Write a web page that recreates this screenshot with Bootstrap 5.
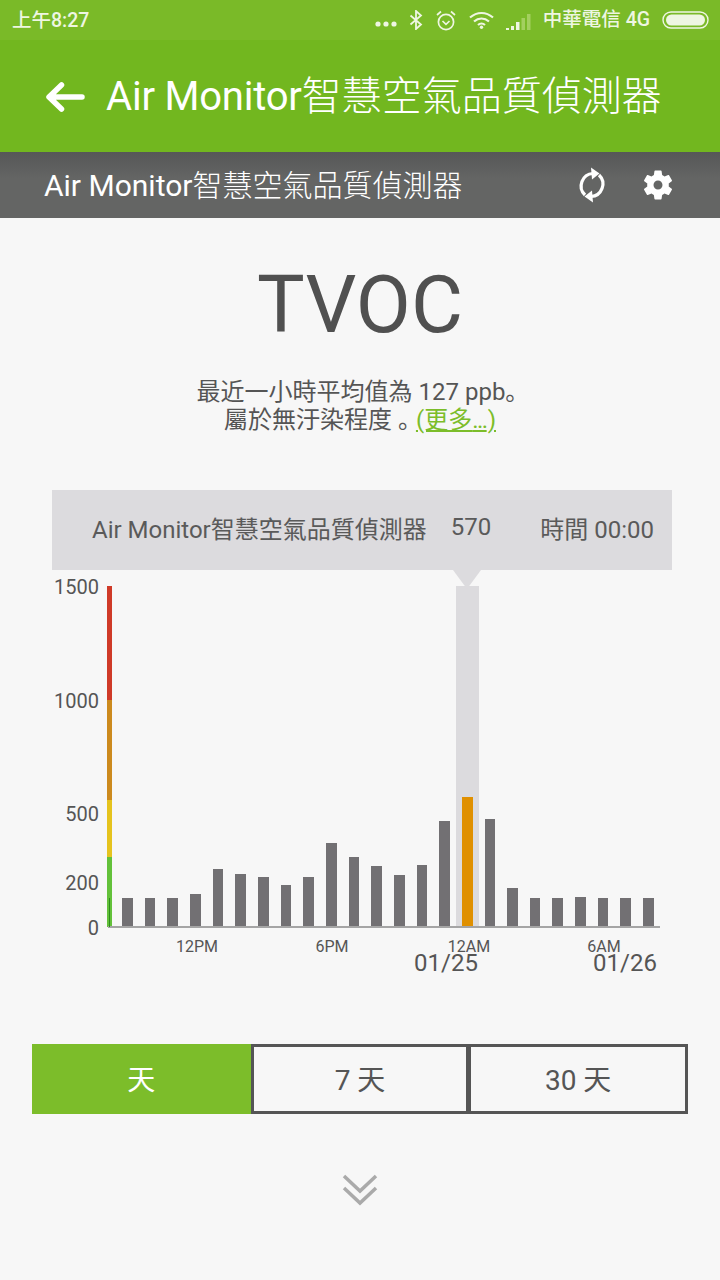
<!DOCTYPE html>
<html lang="zh-Hant">
<head>
  <meta charset="UTF-8">
  <title>Air Monitor</title>
  <meta name="viewport" content="width=device-width, initial-scale=1">
  <link href="https://cdn.jsdelivr.net/npm/bootstrap@5.3.3/dist/css/bootstrap.min.css" rel="stylesheet">
  <style>
    html, body { height: 100%; }
    body {
      width: 720px; height: 1280px; overflow: hidden; background: #f7f7f7; color: #555;
      font-family: Roboto, "Noto Sans CJK TC", sans-serif;
    }
    .status-bar { height: 40px; background: #7aba28; color: #eef6e2; font-size: 19.5px; font-weight: 500; padding: 1px 11px 0 12px; }
    .status-icons { gap: 12px; margin-top: -1px; }
    .app-bar { height: 112px; background: #72b71f; color: #fff; padding: 2px 0 0 45px; gap: 21px; font-size: 40px; line-height: 1; }
    .app-bar .latin { letter-spacing: -.2px; }
    .cjk-light { font-weight: 300; }
    .sub-bar { height: 66px; background: linear-gradient(#565757, #646564 40%); color: #fff; font-size: 30px; padding: 2px 44px 0; line-height: 1; }
    .sub-icons { gap: 31px; margin-top: -2px; }
    .title-big { font-size: 80px; line-height: 1; margin: 47px 0 0; font-weight: 400; color: #505050; }
    .summary { font-family: Roboto, "Noto Sans CJK JP", sans-serif; font-size: 24px; line-height: 28px; margin-top: 33px; color: #555; }
    .summary a { color: #7cbd2a; }
    .summary .dots { letter-spacing: -1.5px; margin-right: 1px; }
    .summary .stop { letter-spacing: -6px; }
    .tip-bar { height: 80px; margin: 56px 48px 0 52px; background: #dcdbde; font-size: 24px; color: #5a5a5a; padding: 0 18px 1px 40px; }
    .tip-val { margin-left: 24px; padding-bottom: 6px; }
    .chart { position: relative; height: 410px; margin: 0; }
    .chart > * { position: absolute; }
    .tip-arrow { left: 453px; top: 0; width: 0; height: 0; border-left: 14px solid transparent; border-right: 14px solid transparent; border-top: 19px solid #dcdbde; }
    .hl-col { left: 456px; top: 16px; width: 23px; height: 341px; background: #dcdbde; }
    .base-line { left: 108px; top: 356px; width: 552px; height: 2px; background: #a5a5a5; }
    .scale { left: 107px; top: 16px; width: 4.5px; height: 341px; display: flex; flex-direction: column; }
    .scale i { display: block; }
    .scale-tick { left: 108.5px; top: 328px; width: 1.5px; height: 29px; background: #2e8b1c; }
    .bars { left: 122px; top: 16px; height: 341px; display: flex; align-items: flex-end; gap: 12px; }
    .bars i { display: block; width: 10.67px; background: #727073; }
    .bars i.on { background: #e09000; }
    .y-lab { right: 621px; font-size: 20px; line-height: 20px; color: #555; }
    .x-lab { font-size: 16px; line-height: 18px; color: #555; transform: translateX(-50%); }
    .date-lab { font-size: 24px; line-height: 24px; color: #555; transform: translateX(-50%); }
    .range-group { margin: 64px 32px 0; height: 70px; }
    .range-group .btn { flex: 0 0 calc(100% / 3); border-radius: 0; border: 3px solid #555; border-left-width: 0; color: #555; font-size: 28px; background: transparent; padding: 4px 0 0; line-height: 1; }
    .range-group .btn.on { background: #7cbd2a; border-color: #7cbd2a; border-right-width: 0; color: #fff; }
    .range-group .btn.on + .btn { border-left: 3px solid #555; }
    .range-group .btn:last-child { border-left: 2px solid #555; }
    .more-down { margin-top: 60px; }
  </style>
</head>
<body>

  <!-- Status bar -->
  <div class="status-bar d-flex align-items-center justify-content-between">
    <span>上午8:27</span>
    <div class="status-icons d-flex align-items-center">
      <svg width="22" height="8" viewBox="0 0 22 8" fill="#eef6e2" class="mt-2"><circle cx="3" cy="4" r="2.600"/><circle cx="11" cy="4" r="2.600"/><circle cx="19" cy="4" r="2.600"/></svg>
      <svg width="15" height="20" viewBox="0 0 15 20" fill="none" stroke="#eef6e2" stroke-width="1.800"><path d="M1.500 5.500 12 14.500 7 19V1l5 4.500L1.500 14.500"/></svg>
      <svg width="21" height="21" viewBox="0 0 21 21" fill="none" stroke="#eef6e2" stroke-width="1.700"><circle cx="10" cy="12" r="7.600"/><path d="M6.500 11 10 14.300l3.500-3.300M1 5l4-3.500M19 5l-4-3.500"/></svg>
      <svg width="25" height="18" viewBox="0 0 25 18" fill="none" stroke="#eef6e2" stroke-width="2.200"><path d="M1 6.500c7-6 16-6 23 0M5 10.500c4.500-4 10.500-4 15 0M9 14c2-1.800 5-1.800 7 0"/><circle cx="12.500" cy="16.300" r="1.700" fill="#eef6e2" stroke="none"/></svg>
      <svg width="25" height="18" viewBox="0 0 25 18" class="mt-1"><path d="M0 15h3v2H0zM5 13h3v4H5zM10 9h3.500v8H10z" fill="#eef6e2"/><path d="M15.500 5h3.500v12h-3.500zM21 1h3.500v16H21z" fill="#a3d05f"/></svg>
      <span>中華電信 4G</span>
      <svg width="47" height="18" viewBox="0 0 47 18"><rect x="1" y="1" width="45" height="16" rx="8" fill="none" stroke="#eef6e2" stroke-width="1.400"/><rect x="4" y="3.500" width="39" height="11" rx="5.500" fill="#eef6e2"/></svg>
    </div>
  </div>

  <!-- App bar -->
  <div class="app-bar d-flex align-items-center">
    <svg width="40" height="34" viewBox="0 0 40 34" fill="none" stroke="#fff" stroke-width="5.500" stroke-linecap="round" stroke-linejoin="round"><path d="M37 17H5M16.500 5 4 17l12.500 12"/></svg>
    <span><span class="latin">Air Monitor</span><span class="cjk-light">智慧空氣品質偵測器</span></span>
  </div>

  <!-- Device bar -->
  <div class="sub-bar d-flex align-items-center justify-content-between">
    <span>Air Monitor<span class="cjk-light">智慧空氣品質偵測器</span></span>
    <div class="sub-icons d-flex align-items-center">
      <svg width="34" height="40" viewBox="0 0 34 40" fill="none" stroke="#fff" stroke-width="3.200"><path d="M18 8.500A12.500 12.500 0 0 0 10 30"/><path d="M16 31.500A12.500 12.500 0 0 0 24 10"/><path d="M16 2.500 24.500 8.500 17 14.500z" fill="#fff" stroke="none"/><path d="M18 37.500 9.500 31.500 17 25.500z" fill="#fff" stroke="none"/></svg>
      <svg width="36" height="36" viewBox="0 0 24 24" fill="#fff"><path d="M19.140 12.940c.04-.3.060-.61.060-.94s-.02-.64-.07-.94l2.030-1.580c.18-.14.230-.41.120-.61l-1.920-3.320c-.12-.22-.37-.29-.59-.22l-2.390.96c-.5-.38-1.030-.7-1.620-.94l-.36-2.540c-.04-.24-.24-.41-.48-.41h-3.840c-.24 0-.43.170-.47.410l-.36 2.540c-.59.240-1.130.57-1.620.94l-2.390-.96c-.22-.08-.47 0-.59.220L2.740 8.870c-.12.210-.08.470.12.610l2.030 1.580c-.05.3-.09.630-.09.940s.02.640.07.940l-2.030 1.580c-.18.140-.23.410-.12.610l1.920 3.320c.12.220.37.290.59.220l2.390-.96c.5.380 1.030.7 1.620.94l.36 2.540c.05.240.24.410.48.410h3.840c.24 0 .44-.17.47-.41l.36-2.540c.59-.24 1.130-.56 1.620-.94l2.390.96c.22.080.47 0 .59-.22l1.920-3.320c.12-.22.070-.47-.12-.61l-2.010-1.580zM12 15c-1.650 0-3-1.350-3-3s1.350-3 3-3 3 1.350 3 3-1.350 3-3 3z"/></svg>
    </div>
  </div>

  <!-- Summary -->
  <div class="text-center">
    <h1 class="title-big">TVOC</h1>
    <p class="summary mb-0" lang="ja">&nbsp;最近一小時平均值為 127 ppb。<br>屬於無汙染程度 <span class="stop">。</span><a href="#">(更多<span class="dots">...</span>)</a></p>
  </div>

  <!-- Tooltip bar -->
  <div class="tip-bar d-flex align-items-center">
    <span>Air Monitor智慧空氣品質偵測器</span>
    <span class="tip-val">570</span>
    <span class="ms-auto">時間 00:00</span>
  </div>

  <!-- Chart -->
  <div class="chart" id="chart">
    <div class="hl-col"></div>
    <div class="tip-arrow"></div>
    <div class="scale" id="scale"></div>
    <div class="bars" id="bars"></div>
    <div class="base-line"></div>
    <div class="scale-tick"></div>
    <span class="y-lab" style="top:7px">1500</span>
    <span class="y-lab" style="top:121px">1000</span>
    <span class="y-lab" style="top:234px">500</span>
    <span class="y-lab" style="top:303px">200</span>
    <span class="y-lab" style="top:348px">0</span>
    <span class="x-lab" style="left:197px;top:368px">12PM</span>
    <span class="x-lab" style="left:332px;top:368px">6PM</span>
    <span class="x-lab" style="left:469px;top:368px">12AM</span>
    <span class="x-lab" style="left:604px;top:368px">6AM</span>
    <span class="date-lab" style="left:446px;top:381px">01/25</span>
    <span class="date-lab" style="left:625px;top:381px">01/26</span>
  </div>

  <!-- Range buttons -->
  <div class="range-group d-flex">
    <button class="btn on">天</button>
    <button class="btn">7 天</button>
    <button class="btn">30 天</button>
  </div>

  <div class="more-down text-center">
    <svg width="36" height="32" viewBox="0 0 36 32" fill="none" stroke="#aaa" stroke-width="3.500"><path d="M2 2l16 15L34 2M2 14l16 15 16-15"/></svg>
  </div>

  <script src="https://cdn.jsdelivr.net/npm/bootstrap@5.3.3/dist/js/bootstrap.bundle.min.js"></script>
  <script>
    // bar heights in px, one per hour
    const bars = [29, 29, 29, 33, 58, 53, 50, 42, 50, 84, 70, 61, 52, 62, 106, 130, 108, 39, 29, 29, 30, 29, 29, 29];
    const barsEl = document.getElementById('bars');
    bars.forEach((h, i) => {
      const b = document.createElement('i');
      b.style.height = h + 'px';
      if (i === 15) b.className = 'on';
      barsEl.appendChild(b);
    });

    // coloured level scale on the y axis
    const scale = [['#cf3a28', 114], ['#cc8a1e', 100], ['#e5c31e', 57], ['#63c13a', 70]];
    const scaleEl = document.getElementById('scale');
    scale.forEach(([c, h]) => {
      const s = document.createElement('i');
      s.style.background = c;
      s.style.height = h + 'px';
      scaleEl.appendChild(s);
    });
  </script>
</body>
</html>
